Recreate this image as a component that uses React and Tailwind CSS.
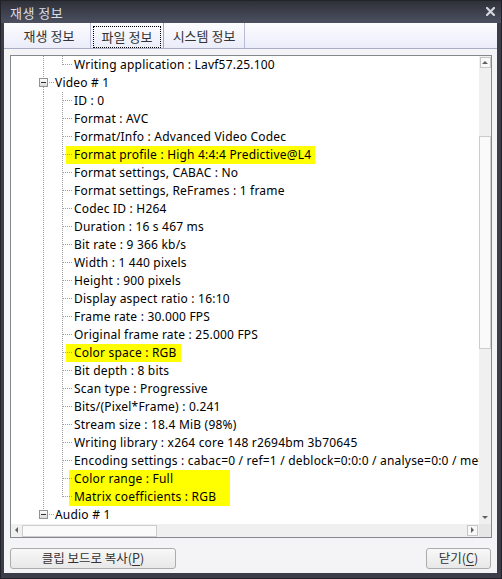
import React from 'react';

const rows = [
  { t: 'Writing application : Lavf57.25.100', k: 'genLast' },
  { t: 'Video # 1', k: 'node' },
  { t: 'ID : 0', k: 'child' },
  { t: 'Format : AVC', k: 'child' },
  { t: 'Format/Info : Advanced Video Codec', k: 'child' },
  { t: 'Format profile : High 4:4:4 Predictive@L4', k: 'child', hl: true },
  { t: 'Format settings, CABAC : No', k: 'child' },
  { t: 'Format settings, ReFrames : 1 frame', k: 'child' },
  { t: 'Codec ID : H264', k: 'child' },
  { t: 'Duration : 16 s 467 ms', k: 'child' },
  { t: 'Bit rate : 9 366 kb/s', k: 'child' },
  { t: 'Width : 1 440 pixels', k: 'child' },
  { t: 'Height : 900 pixels', k: 'child' },
  { t: 'Display aspect ratio : 16:10', k: 'child' },
  { t: 'Frame rate : 30.000 FPS', k: 'child' },
  { t: 'Original frame rate : 25.000 FPS', k: 'child' },
  { t: 'Color space : RGB', k: 'child', hl: true },
  { t: 'Bit depth : 8 bits', k: 'child' },
  { t: 'Scan type : Progressive', k: 'child' },
  { t: 'Bits/(Pixel*Frame) : 0.241', k: 'child' },
  { t: 'Stream size : 18.4 MiB (98%)', k: 'child' },
  { t: 'Writing library : x264 core 148 r2694bm 3b70645', k: 'child' },
  { t: 'Encoding settings : cabac=0 / ref=1 / deblock=0:0:0 / analyse=0:0 / me=dia / subme=0 / psy=0', k: 'child' },
];

const dot = { stroke: '#a0a0a0', strokeWidth: 1, strokeDasharray: '1 1', shapeRendering: 'crispEdges' };

// tree connector lines for one row
const Lines = ({ k, w = 63 }) => (
  <svg width={w} height="18" className="shrink-0 relative z-10 block">
    {(k === 'child' || k === 'childLast' || k === 'genLast') && (
      <line x1="32.5" y1="0" x2="32.5" y2="18" {...dot} />
    )}
    {k === 'child' && <line x1="51.5" y1="0" x2="51.5" y2="18" {...dot} />}
    {(k === 'childLast' || k === 'genLast') && <line x1="51.5" y1="0" x2="51.5" y2="9" {...dot} />}
    {(k === 'child' || k === 'childLast' || k === 'genLast') && (
      <line x1="52" y1="8.5" x2="62" y2="8.5" {...dot} />
    )}
    {(k === 'node' || k === 'nodeLast') && (
      <>
        <line x1="32.5" y1="0" x2="32.5" y2="4" {...dot} />
        {k === 'node' && <line x1="32.5" y1="13" x2="32.5" y2="18" {...dot} />}
        <defs>
          <linearGradient id={'bx' + k} x1="0" y1="0" x2="0" y2="1">
            <stop offset="0" stopColor="#ffffff" />
            <stop offset="1" stopColor="#d8d8d8" />
          </linearGradient>
        </defs>
        <rect x="28.5" y="4.5" width="8" height="8" fill={'url(#bx' + k + ')'} stroke="#929292" shapeRendering="crispEdges" />
        <line x1="30" y1="8.5" x2="35" y2="8.5" stroke="#303030" shapeRendering="crispEdges" />
        <line x1="38" y1="8.5" x2="44" y2="8.5" {...dot} />
      </>
    )}
  </svg>
);

const Tri = ({ dir }) => {
  const pts = {
    up: '0,4 6,4 3,1',
    down: '0,1 6,1 3,4',
    left: '4,0 4,6 1,3',
    right: '1,0 1,6 4,3',
  }[dir];
  const vert = dir === 'up' || dir === 'down';
  return (
    <svg width={vert ? 7 : 5} height={vert ? 5 : 7}>
      <polygon points={pts} fill="#606060" />
    </svg>
  );
};

export default function App() {
  const ko = { fontFamily: "'Noto Sans CJK KR', 'Noto Sans', sans-serif" };
  return (
    <div className="w-[502px] h-[579px] bg-[#3b3e49] flex flex-col border border-[#22232a]" style={ko}>
      {/* title bar */}
      <div className="h-[22px] shrink-0 flex items-center justify-between pl-[9px] pr-[6px] bg-gradient-to-b from-[#2f3139] to-[#4c5060]">
        <span className="text-[13px] text-[#dcdde2] leading-none tracking-[0.5px]">재생 정보</span>
        <svg width="9" height="9" viewBox="0 0 9 9" className="mt-[-2px]">
          <path d="M1 1 L8 8 M8 1 L1 8" stroke="#d4d6de" strokeWidth="2.2" strokeLinecap="square" />
        </svg>
      </div>

      {/* client area */}
      <div className="flex-1 ml-[3px] mr-[4px] mb-[5px] bg-[#f4f4f6] flex flex-col">
        {/* tabs */}
        <div className="h-[26px] shrink-0 flex border-b border-[#a9adc6] bg-gradient-to-b from-[#fdfdff] to-[#eaecf9] text-[13px] text-[#333]">
          <div className="w-[87px] border-r border-[#b8bcd6] flex items-center justify-center pl-[4px]">재생 정보</div>
          <div className="w-[73px] border-r border-[#a3a7c2] flex p-[2px] pt-[3px] pb-0">
            <div className="flex-1 border border-dotted border-black flex items-center justify-center">파일 정보</div>
          </div>
          <div className="w-[81px] border-r border-[#b8bcd6] flex items-center justify-center">시스템 정보</div>
        </div>

        {/* tree box */}
        <div className="ml-[6px] mr-[5px] mt-[6px] h-[483px] border border-[#868890] bg-white flex flex-col">
          <div className="flex flex-1 min-h-0">
            <div
              className="flex-1 overflow-hidden whitespace-nowrap text-[12px] leading-[18px] tracking-[0.2px] text-black"
              style={{ fontFamily: "'Noto Sans', sans-serif" }}
            >
              {rows.map((r, i) =>
                r.k === 'node' ? (
                  <div key={i} className="flex h-[18px]">
                    <Lines k="node" w={44} />
                    <span>{r.t}</span>
                  </div>
                ) : (
                  <div key={i} className="flex h-[18px]">
                    <Lines k={r.k} />
                    {r.hl ? (
                      <span className="-ml-[8px] pl-[8px] pr-[4px] bg-[#ffff00]">{r.t}</span>
                    ) : (
                      <span>{r.t}</span>
                    )}
                  </div>
                )
              )}
              <div className="flex">
                <div className="flex flex-col">
                  <Lines k="child" />
                  <Lines k="childLast" />
                </div>
                <div className="-ml-[5px] pl-[5px] w-[161px] bg-[#ffff00]">
                  <div className="h-[18px]">Color range : Full</div>
                  <div className="h-[18px]">Matrix coefficients : RGB</div>
                </div>
              </div>
              <div className="flex h-[18px]">
                <Lines k="nodeLast" w={44} />
                <span>Audio # 1</span>
              </div>
            </div>

            {/* vertical scrollbar */}
            <div className="w-[12px] bg-[#f0f0f0] flex flex-col items-center">
              <div className="mt-[1px] w-[11px] h-[11px] border border-[#c6c6c6] bg-[#f8f8f8] flex items-center justify-center">
                <Tri dir="up" />
              </div>
              <div className="mt-[68px] w-[12px] h-[213px] border border-[#cdcdcd] bg-[#fafafa]" />
              <div className="flex-1" />
              <div className="h-[11px] mb-[1px] flex items-center justify-center">
                <Tri dir="down" />
              </div>
            </div>
          </div>

          {/* horizontal scrollbar */}
          <div className="h-[13px] shrink-0 flex">
            <div className="flex-1 bg-[#f0f0f0] flex items-center">
              <div className="w-[11px] flex justify-center">
                <Tri dir="left" />
              </div>
              <div className="w-[135px] h-[12px] border border-[#cdcdcd] bg-[#fafafa]" />
              <div className="flex-1" />
              <div className="w-[11px] h-[11px] mr-[1px] border border-[#c6c6c6] bg-[#f8f8f8] flex items-center justify-center">
                <Tri dir="right" />
              </div>
            </div>
            <div className="w-[12px] bg-[#e6e6e6]" />
          </div>
        </div>

        {/* buttons */}
        <div className="flex justify-between items-start pt-[10px] pl-[6px] pr-[6px] text-[12.5px] text-[#333]">
          <button className="w-[166px] h-[21px] rounded-[3px] border border-[#acacac] bg-gradient-to-b from-[#f8f8f8] to-[#e8e8e8] flex items-center justify-center leading-none">
            클립 보드로 복사(<span className="underline underline-offset-2">P</span>)
          </button>
          <button className="w-[65px] h-[21px] rounded-[3px] border border-[#acacac] bg-gradient-to-b from-[#f8f8f8] to-[#e8e8e8] flex items-center justify-center leading-none">
            닫기(<span className="underline underline-offset-2">C</span>)
          </button>
        </div>
      </div>
    </div>
  );
}
